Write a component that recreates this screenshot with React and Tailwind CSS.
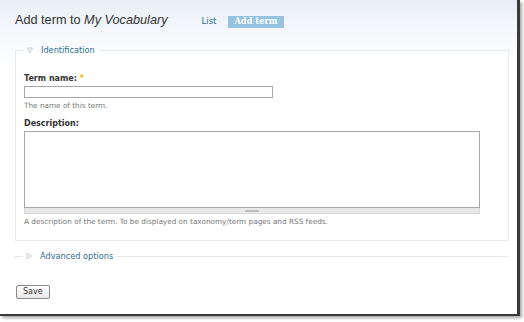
import React from 'react';

const Triangle = ({ down }) => (
  <svg width="6" height="6" viewBox="0 0 6 6" className="shrink-0">
    {down ? (
      <path d="M0.5 1h5L3 5.5z" fill="none" stroke="#b8c4cc" strokeWidth="0.8" />
    ) : (
      <path d="M1 0.5v5L5.5 3z" fill="none" stroke="#b8c4cc" strokeWidth="0.8" />
    )}
  </svg>
);

const Legend = ({ label, down }) => (
  <div className="flex items-center h-[10px]">
    <div className="w-[9px] h-px bg-[#e3e9ee]" />
    <div className="px-[3px]">
      <Triangle down={down} />
    </div>
    <span className="pl-[5px] pr-[4px] text-[8.2px] leading-none text-[#2d6e90]">{label}</span>
    <div className="flex-1 h-px bg-[#e3e9ee]" />
  </div>
);

export default function App() {
  return (
    <div className="w-[524px] h-[322px] bg-white font-['DejaVu_Sans',sans-serif]">
      <div className="w-[520px] h-[316px] border-r-[3px] border-b-[2px] border-[#3a3a3a] shadow-[2px_2px_3px_rgba(0,0,0,0.35)] bg-gradient-to-b from-[#e9eff6] via-[#f7f9fc] to-white bg-[length:100%_70px] bg-no-repeat">
        {/* Header */}
        <div className="flex items-end pl-[15px] pt-[10px] h-[27px]">
          <h1 className="font-['Liberation_Sans',sans-serif] text-[12.7px] leading-none text-[#333]">
            Add term to <em>My Vocabulary</em>
          </h1>
          <div className="flex items-center ml-[34px] mb-[-1px]">
            <span className="text-[8.5px] text-[#2d6e90]">List</span>
            <span className="ml-[12px] h-[12px] px-[6px] flex items-center bg-[#95c3e0] text-white font-bold text-[8.3px] font-['DejaVu_Serif',serif]">
              Add term
            </span>
          </div>
        </div>

        {/* Identification fieldset */}
        <div className="mt-[23px] mx-[15px] w-[494px]">
          <div className="relative border border-t-0 border-[#e6ecf1] bg-white h-[191px] mt-[5px]">
            <div className="absolute left-[-1px] right-[-1px] top-[-5px]">
              <Legend label="Identification" down />
            </div>
            <div className="pl-[8px] pt-[25px]">
              <label className="block text-[8px] font-bold text-[#333] leading-none">
                Term name: <span className="text-[#f5b800]">*</span>
              </label>
              <div className="mt-[3px] w-[249px] h-[12px] border border-[#a8a8a8] bg-white" />
              <p className="mt-[4px] text-[7.3px] text-[#777] leading-none">The name of this term.</p>

              <label className="block mt-[11px] text-[8px] font-bold text-[#333] leading-none">
                Description:
              </label>
              <div className="mt-[3px] w-[456px]">
                <div className="h-[77px] border border-[#a8a8a8] bg-white" />
                <div className="h-[6px] bg-[#e8e8e8] border-x border-b border-[#dadada] flex justify-center items-center">
                  <div className="w-[14px] h-[2px] bg-[#bcbcbc]" />
                </div>
              </div>
              <p className="mt-[4px] text-[7.3px] text-[#777] leading-none">
                A description of the term. To be displayed on taxonomy/term pages and RSS feeds.
              </p>
            </div>
          </div>
        </div>

        {/* Advanced options */}
        <div className="mt-[10px] mx-[14px] w-[495px]">
          <Legend label="Advanced options" />
        </div>

        {/* Save */}
        <div className="pl-[16px] mt-[16px]">
          <button className="h-[14px] px-[6px] border border-[#8a8a8a] rounded-[2px] bg-gradient-to-b from-white to-[#e8e8e8] text-[8px] leading-none text-[#333]">
            Save
          </button>
        </div>
      </div>
    </div>
  );
}
